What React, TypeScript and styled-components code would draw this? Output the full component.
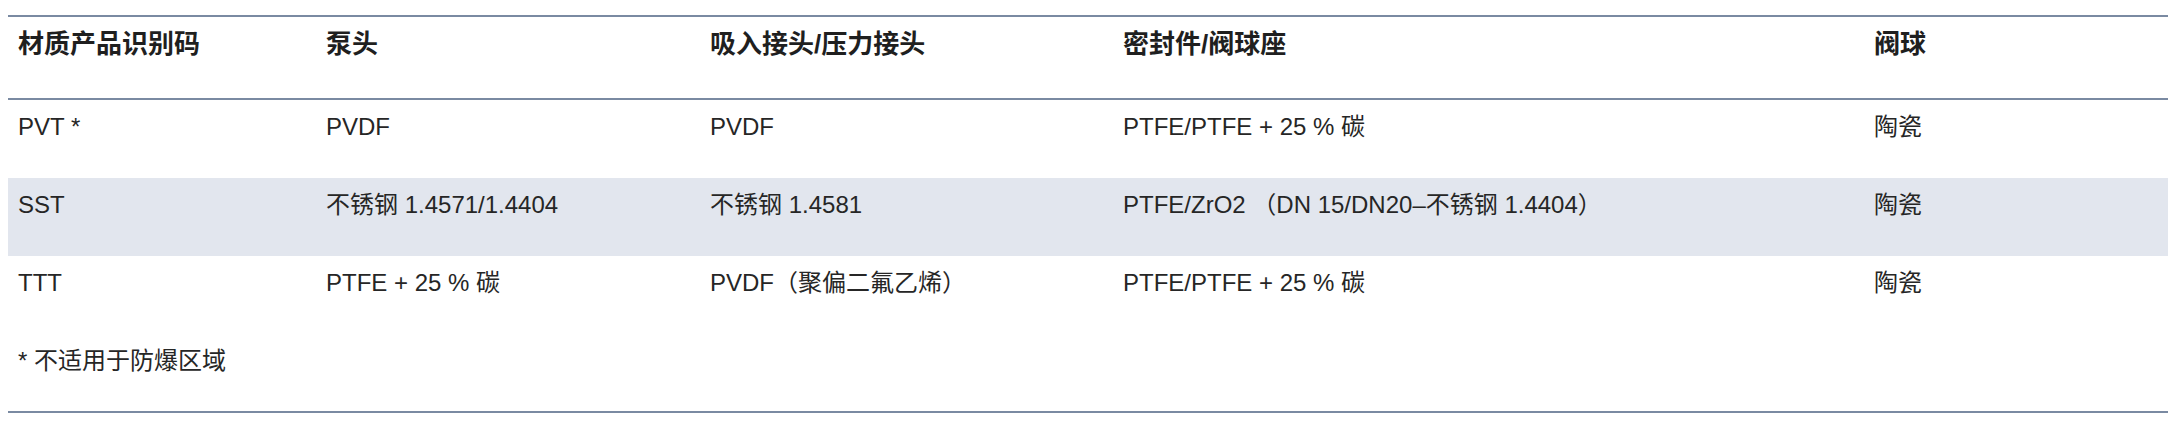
import { createGlobalStyle } from "styled-components";
import styled from "styled-components";

const GlobalStyle = createGlobalStyle`
  html, body {
    margin: 0;
    padding: 0;
    background: #ffffff;
  }
  body {
    font-family: "Liberation Sans", "Noto Sans CJK SC", sans-serif;
    color: #262626;
  }
`;

const rows = [
  ["PVT *", "PVDF", "PVDF", "PTFE/PTFE + 25 % 碳", "陶瓷"],
  [
    "SST",
    "不锈钢 1.4571/1.4404",
    "不锈钢 1.4581",
    "PTFE/ZrO2 （DN 15/DN20–不锈钢 1.4404）",
    "陶瓷",
  ],
  ["TTT", "PTFE + 25 % 碳", "PVDF（聚偏二氟乙烯）", "PTFE/PTFE + 25 % 碳", "陶瓷"],
];

const headers = ["材质产品识别码", "泵头", "吸入接头/压力接头", "密封件/阀球座", "阀球"];
const colWidths = [308, 384, 413, 751, 304];

export default function App() {
  return (
    <>
      <GlobalStyle />
      <Page>
        <Table>
          <colgroup>
            {colWidths.map((w, i) => (
              <col key={i} style={{ width: w }} />
            ))}
          </colgroup>
          <thead>
            <tr>
              {headers.map((h) => (
                <HeadCell key={h}>{h}</HeadCell>
              ))}
            </tr>
          </thead>
          <tbody>
            {rows.map((r, i) => (
              <Row key={i} $striped={i % 2 === 1}>
                {r.map((c, j) => (
                  <Cell key={j}>{c}</Cell>
                ))}
              </Row>
            ))}
          </tbody>
          <tfoot>
            <Row $striped={false}>
              <FootCell colSpan={5}>* 不适用于防爆区域</FootCell>
            </Row>
          </tfoot>
        </Table>
      </Page>
    </>
  );
}

const Page = styled.div`
  padding: 15px 11px 17px 8px;
`;

const Table = styled.table`
  width: 2160px;
  table-layout: fixed;
  border-collapse: collapse;
  border-top: 2px solid #7a8aa2;
  border-bottom: 2px solid #7a8aa2;
`;

const HeadCell = styled.th`
  text-align: left;
  vertical-align: top;
  padding: 10px 10px 37px;
  font-family: "Liberation Sans", "Noto Sans CJK SC", sans-serif;
  font-size: 26px;
  line-height: 34px;
  font-weight: 700;
  color: #1f1f1f;
  border-bottom: 2px solid #7a8aa2;
`;

const Row = styled.tr<{ $striped: boolean }>`
  background: ${(p) => (p.$striped ? "#e2e6ee" : "transparent")};
`;

const Cell = styled.td`
  vertical-align: top;
  padding: 11px 10px 35px;
  height: 32px;
  font-size: 24px;
  line-height: 32px;
  color: #262626;
  white-space: nowrap;
`;

const FootCell = styled(Cell)`
  padding-bottom: 34px;
`;
